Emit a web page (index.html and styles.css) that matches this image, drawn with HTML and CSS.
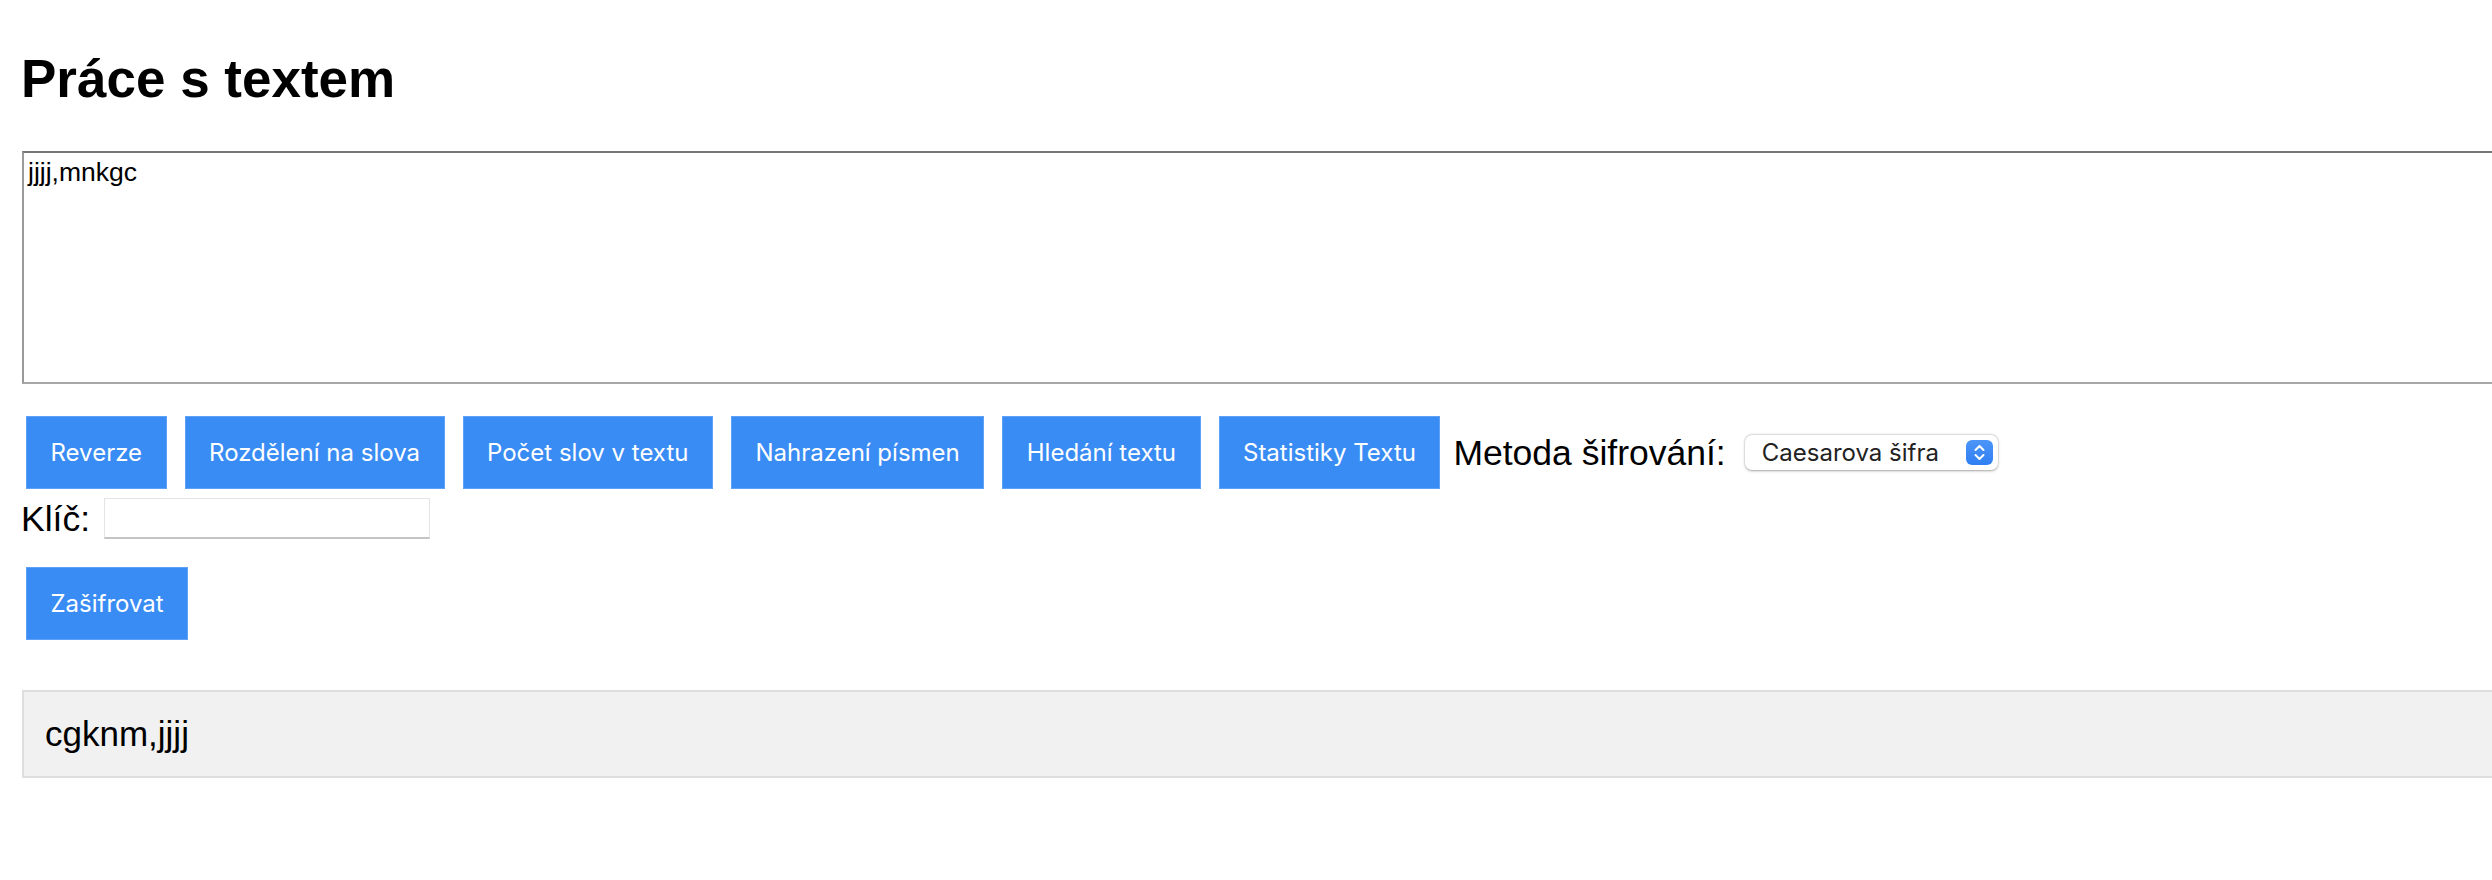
FILE: index.html
```html
<!DOCTYPE html>
<html lang="cs">
<head>
<meta charset="utf-8">
<title>Práce s textem</title>
<link rel="stylesheet" href="styles.css">
</head>
<body>
<h1 class="title">Práce s textem</h1>
<textarea class="source-text">jjjj,mnkgc</textarea>
<div class="toolbar">
  <div class="btn-group">
    <button class="btn">Reverze</button>
    <button class="btn">Rozdělení na slova</button>
    <button class="btn">Počet slov v textu</button>
    <button class="btn">Nahrazení písmen</button>
    <button class="btn">Hledání textu</button>
    <button class="btn">Statistiky Textu</button>
  </div>
  <label class="field-label" for="method">Metoda šifrování:</label>
  <div class="select-wrap">
    <select class="select" id="method"><option>Caesarova šifra</option></select>
    <span class="select-arrow"><svg width="27" height="25" viewBox="0 0 27 25"><path d="M9.5 10 L13.5 6 L17.5 10" fill="none" stroke="#fff" stroke-width="2" stroke-linecap="round" stroke-linejoin="round"/><path d="M9.5 15 L13.5 19 L17.5 15" fill="none" stroke="#fff" stroke-width="2" stroke-linecap="round" stroke-linejoin="round"/></svg></span>
  </div>
</div>
<div class="key-row">
  <label class="field-label" for="key">Klíč:</label>
  <input class="key-input" id="key" type="text">
</div>
<div class="action-row">
  <button class="btn">Zašifrovat</button>
</div>
<div class="output">cgknm,jjjj</div>
</body>
</html>
```
FILE: styles.css
```css
html, body {
  overflow: hidden;
}
body {
  margin: 0;
  padding: 18px 0 0 21px;
  font-family: "Liberation Sans", Arial, sans-serif;
  font-size: 35px;
  color: #000;
  background: #fff;
}
.title {
  font-size: 53px;
  font-weight: bold;
  line-height: 61px;
  margin: 30px 0 42px 0;
}
.source-text {
  display: block;
  box-sizing: border-box;
  width: calc(100% + 120px);
  height: 233px;
  margin: 0 0 0 1px;
  padding: 4px 4px;
  border: 2px solid;
  border-color: #767676 #9a9a9a #a8a8a8 #9a9a9a;
  font-family: "Liberation Sans", Arial, sans-serif;
  font-size: 26.5px;
  resize: none;
  background: #fff;
}
.toolbar {
  display: flex;
  align-items: center;
  gap: 13px;
  margin: 32px 0 0 5px;
}
.btn-group {
  display: flex;
  gap: 18px;
}
.btn {
  height: 73px;
  padding: 0 23.5px;
  border: 1px solid #5ea1f7;
  background: #3a8cf5;
  color: #fff;
  font-family: Inter, "Liberation Sans", sans-serif;
  font-size: 24px;
  font-weight: 400;
  cursor: pointer;
}
.field-label {
  font-size: 35.5px;
  line-height: 40px;
}
.select-wrap {
  position: relative;
  margin-left: 6px;
}
.select {
  display: block;
  appearance: none;
  -webkit-appearance: none;
  box-sizing: border-box;
  width: 253px;
  height: 35px;
  padding: 0 40px 0 17px;
  border: 0;
  border-radius: 7px;
  background: #fff;
  box-shadow: 0 0.5px 2.5px rgba(0,0,0,0.35), 0 0 0 0.5px rgba(0,0,0,0.06);
  font-family: Inter, "Liberation Sans", sans-serif;
  font-size: 24px;
  color: #222;
}
.select-arrow {
  position: absolute;
  top: 5px;
  right: 5px;
  width: 27px;
  height: 25px;
  border-radius: 6px;
  background: linear-gradient(#4c95f8, #2f7ff3);
  display: flex;
  pointer-events: none;
}
.key-row {
  display: flex;
  align-items: center;
  gap: 14px;
  margin-top: 9px;
}
.key-input {
  box-sizing: border-box;
  width: 326px;
  height: 41px;
  border: 1px solid #e4e4e4;
  border-bottom: 2px solid #c4c4c4;
  font-size: 24px;
  padding: 0 6px;
}
.action-row {
  display: flex;
  margin: 28px 0 0 5px;
}
.output {
  box-sizing: border-box;
  width: calc(100% + 120px);
  margin: 50px 0 0 1px;
  padding: 21px 21px;
  border: 2px solid #dedede;
  background: #f1f1f1;
  font-size: 35px;
  line-height: 42px;
}
```
